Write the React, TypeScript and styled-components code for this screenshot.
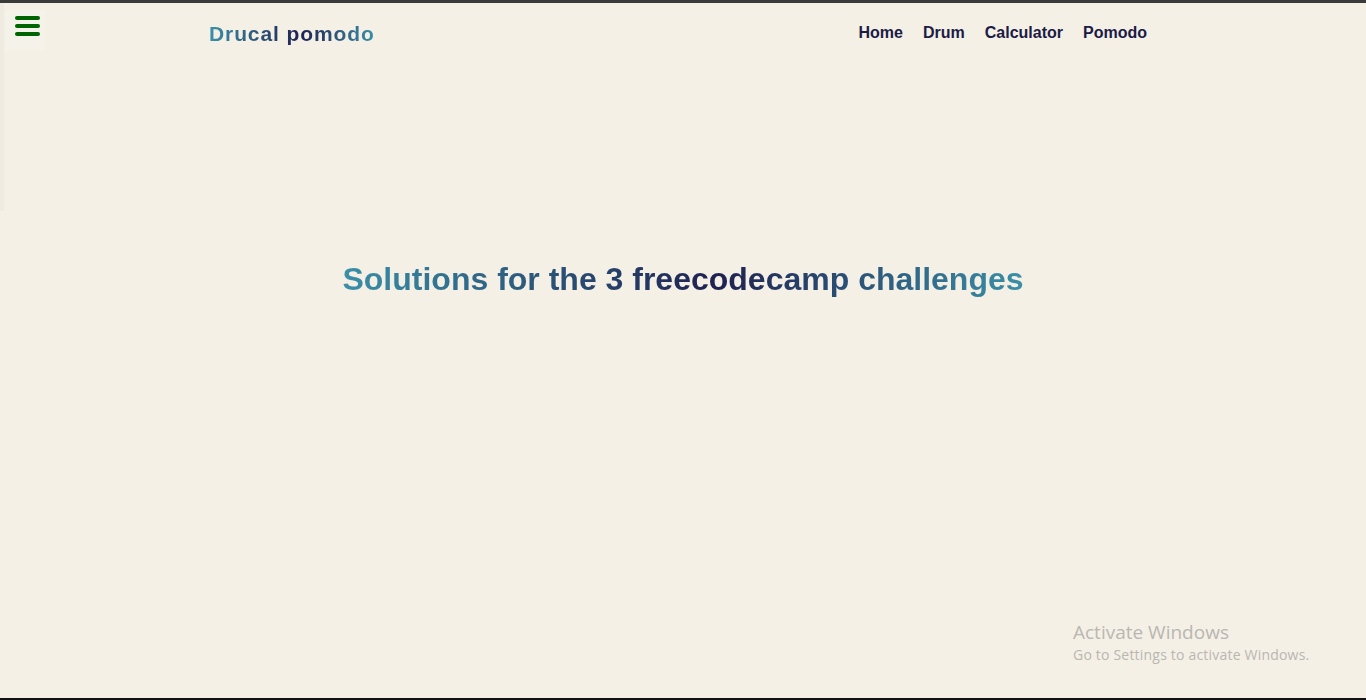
import React from 'react'
import styled, { createGlobalStyle } from 'styled-components'

const GlobalStyle = createGlobalStyle`
  * { box-sizing: border-box; }
  html, body { margin: 0; padding: 0; }
  body {
    background: #f4f0e6;
    font-family: 'Liberation Sans', Arial, sans-serif;
  }
`

const gradient = 'linear-gradient(90deg, #3a90a8 0%, #1f2150 55%, #3a90a8 100%)'

const Page = styled.div`
  position: relative;
  height: 100vh;
  border-top: 3px solid #3a3a3a;
  border-bottom: 2px solid #111;
  background: #f4f0e6;
  display: flex;
  flex-direction: column;
`

const SideEdge = styled.div`
  position: absolute;
  left: 0;
  top: 0;
  width: 4px;
  height: 208px;
  background: #efebe0;
`

const MenuButton = styled.button`
  position: absolute;
  top: 7px;
  left: 5px;
  width: 40px;
  height: 40px;
  padding: 6px 10px;
  border: none;
  background: #f5f2ea;
  display: flex;
  flex-direction: column;
  gap: 4px;
  cursor: pointer;
`

const Bar = styled.span`
  display: block;
  width: 25px;
  height: 4px;
  border-radius: 2px;
  background: #006400;
`

const Header = styled.header`
  display: flex;
  align-items: center;
  justify-content: space-between;
  height: 60px;
  padding: 0 219px 0 209px;
`

const Logo = styled.div`
  font-size: 21px;
  font-weight: bold;
  letter-spacing: 0.9px;
  margin-top: 2px;
  background: ${gradient};
  -webkit-background-clip: text;
  background-clip: text;
  color: transparent;
`

const Nav = styled.nav`
  display: flex;
  gap: 20px;
  margin-top: -1px;
`

const NavLink = styled.a`
  font-size: 16px;
  font-weight: bold;
  color: #1c1b45;
  text-decoration: none;
  cursor: pointer;
`

const Main = styled.main`
  display: flex;
  justify-content: center;
  padding-top: 198px;
`

const Title = styled.h1`
  margin: 0;
  font-size: 32px;
  font-weight: bold;
  background: ${gradient};
  -webkit-background-clip: text;
  background-clip: text;
  color: transparent;
`

const Watermark = styled.div`
  position: absolute;
  left: 1073px;
  top: 617px;
  font-family: 'Open Sans', 'Noto Sans', sans-serif;
  color: #b9b7b1;
`

const WatermarkTitle = styled.div`
  font-size: 19px;
  line-height: 24px;
`

const WatermarkText = styled.div`
  font-size: 14px;
  line-height: 21px;
  letter-spacing: 0.2px;
`

const links = ['Home', 'Drum', 'Calculator', 'Pomodo']

export default function App() {
  return (
    <>
      <GlobalStyle />
      <Page>
        <SideEdge />
        <MenuButton aria-label="menu">
          <Bar />
          <Bar />
          <Bar />
        </MenuButton>
        <Header>
          <Logo>Drucal pomodo</Logo>
          <Nav>
            {links.map((l) => (
              <NavLink key={l}>{l}</NavLink>
            ))}
          </Nav>
        </Header>
        <Main>
          <Title>Solutions for the 3 freecodecamp challenges</Title>
        </Main>
        <Watermark>
          <WatermarkTitle>Activate Windows</WatermarkTitle>
          <WatermarkText>Go to Settings to activate Windows.</WatermarkText>
        </Watermark>
      </Page>
    </>
  )
}
